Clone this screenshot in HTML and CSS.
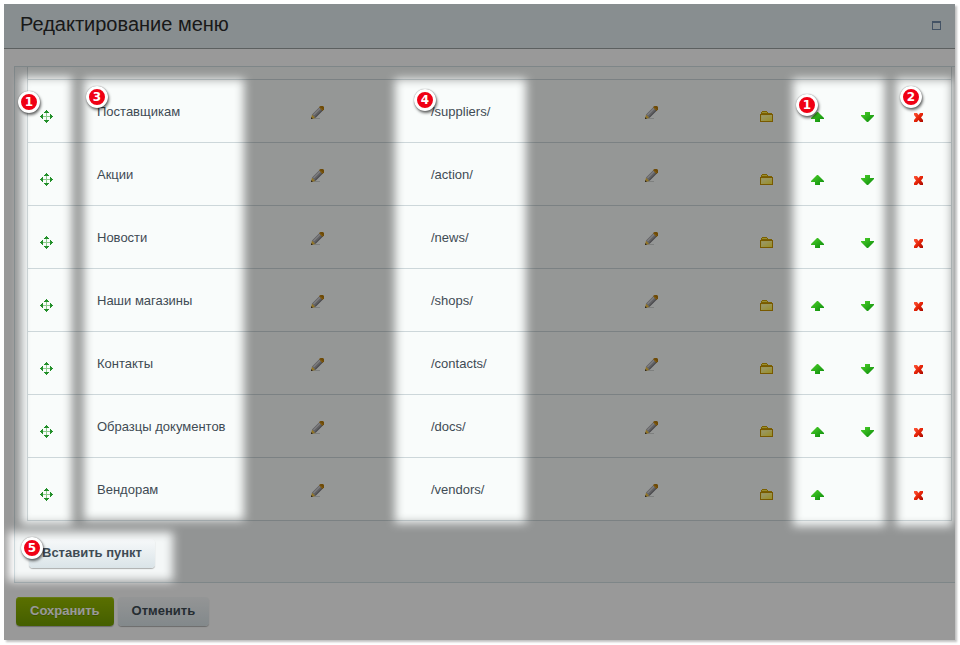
FILE: index.html
```html
<!DOCTYPE html>
<html lang="ru">
<head>
<meta charset="utf-8">
<title>Редактирование меню</title>
<link rel="stylesheet" href="styles.css">
</head>
<body>
<svg class="sprite" aria-hidden="true">
  <defs>
    <linearGradient id="green" x1="0" y1="0" x2="1" y2="1"><stop offset="0" stop-color="#4ed22a"/><stop offset="1" stop-color="#0a8a0a"/></linearGradient>
    <linearGradient id="red" x1="0" y1="0" x2="1" y2="1"><stop offset="0" stop-color="#ff5a3c"/><stop offset=".5" stop-color="#e62408"/><stop offset="1" stop-color="#a80a00"/></linearGradient>
    <linearGradient id="yellow" x1="0" y1="0" x2="1" y2="1"><stop offset="0" stop-color="#fffcb4"/><stop offset="1" stop-color="#ffee3c"/></linearGradient>
  </defs>
  <symbol id="move" viewBox="0 0 13 13">
    <path d="M6 3h1v7H6zM3 6h7v1H3z" fill="#8ccb8c"/>
    <path d="M6 0h1v1h1v1h1v1H4V2h1V1h1zM6 13h1v-1h1v-1h1v-1H4v1h1v1h1zM0 6h1V5h1V4h1v5H2V8H1V7H0zM13 6h-1V5h-1V4h-1v5h1V8h1V7h1z" fill="#23902a"/>
  </symbol>
  <symbol id="pencil" viewBox="0 0 13 13">
    <path d="M2 12.5h7" stroke="#d2d5d4"/>
    <path d="M0 13 1 8.5 4.500 12z" fill="#f0c03c"/>
    <path d="M0 13v-2L2 13z" fill="#504028"/>
    <path d="M1 8.500 8.500 1 12 4.500 4.500 12z" fill="#a0a0a4"/>
    <path d="M2 8.500 9 1.500 10 2.500 3 9.500z" fill="#d0d0d4"/>
    <path d="M4 11.500 11.500 4" stroke="#707074"/>
    <path d="M8 1 9.500 0H12l1 1v2.500L11.500 5z" fill="#b87c0b"/>
    <path d="M9 1.500 11.500 4" stroke="#e8a828"/>
  </symbol>
  <symbol id="folder" viewBox="0 0 13 11">
    <path d="M2 0h5v1h1v1h4v1H1V1h1z" fill="#cda000"/>
    <path d="M2 1h5v1H2z" fill="#ffee50"/>
    <path d="M0 3h13v8H0z" fill="#c89400"/>
    <path d="M1 4h11v6H1z" fill="#fff890"/>
    <path d="M2 5h10v5H2z" fill="url(#yellow)"/>
  </symbol>
  <symbol id="up" viewBox="0 0 13 10"><path d="M6 0h1l2 2 4 4v1H9v3H4V7H0V6l4-4z" fill="url(#green)"/></symbol>
  <symbol id="down" viewBox="0 0 13 10"><path d="M4 0h5v3h4v1L7 10H6L0 4V3h4z" fill="url(#green)"/></symbol>
  <symbol id="cross" viewBox="0 0 9 9"><path d="M0 0h3l1.500 2L6 0h3v2L7 4.500 9 7v2H6L4.500 7 3 9H0V7l2-2.500L0 2z" fill="url(#red)"/></symbol>
</svg>

<form class="dialog">
  <header class="dialog-head">
    <h1>Редактирование меню</h1>
    <button type="button" class="maximize" aria-label="Развернуть"></button>
  </header>
  <main class="pane">
    <table class="menu">
      <colgroup><col class="c-move"><col><col class="c-edit"><col><col class="c-edit-link"><col class="c-folder"><col class="c-up"><col class="c-down"><col class="c-del"></colgroup>
      <thead><tr><td colspan="9"></td></tr></thead>
      <tbody>
        <tr><td class="low move"><button type="button" aria-label="Переместить"><svg width="13" height="13"><use href="#move"/></svg></button></td><td>Поставщикам</td><td><button type="button" aria-label="Изменить название"><svg width="13" height="13"><use href="#pencil"/></svg></button></td><td>/suppliers/</td><td><button type="button" aria-label="Изменить ссылку"><svg width="13" height="13"><use href="#pencil"/></svg></button></td><td class="low"><button type="button" aria-label="Выбрать файл"><svg width="13" height="11"><use href="#folder"/></svg></button></td><td class="low"><button type="button" aria-label="Вверх"><svg width="13" height="10"><use href="#up"/></svg></button></td><td class="low"><button type="button" aria-label="Вниз"><svg width="13" height="10"><use href="#down"/></svg></button></td><td class="low del"><button type="button" aria-label="Удалить"><svg width="9" height="9"><use href="#cross"/></svg></button></td></tr>
        <tr><td class="low move"><button type="button" aria-label="Переместить"><svg width="13" height="13"><use href="#move"/></svg></button></td><td>Акции</td><td><button type="button" aria-label="Изменить название"><svg width="13" height="13"><use href="#pencil"/></svg></button></td><td>/action/</td><td><button type="button" aria-label="Изменить ссылку"><svg width="13" height="13"><use href="#pencil"/></svg></button></td><td class="low"><button type="button" aria-label="Выбрать файл"><svg width="13" height="11"><use href="#folder"/></svg></button></td><td class="low"><button type="button" aria-label="Вверх"><svg width="13" height="10"><use href="#up"/></svg></button></td><td class="low"><button type="button" aria-label="Вниз"><svg width="13" height="10"><use href="#down"/></svg></button></td><td class="low del"><button type="button" aria-label="Удалить"><svg width="9" height="9"><use href="#cross"/></svg></button></td></tr>
        <tr><td class="low move"><button type="button" aria-label="Переместить"><svg width="13" height="13"><use href="#move"/></svg></button></td><td>Новости</td><td><button type="button" aria-label="Изменить название"><svg width="13" height="13"><use href="#pencil"/></svg></button></td><td>/news/</td><td><button type="button" aria-label="Изменить ссылку"><svg width="13" height="13"><use href="#pencil"/></svg></button></td><td class="low"><button type="button" aria-label="Выбрать файл"><svg width="13" height="11"><use href="#folder"/></svg></button></td><td class="low"><button type="button" aria-label="Вверх"><svg width="13" height="10"><use href="#up"/></svg></button></td><td class="low"><button type="button" aria-label="Вниз"><svg width="13" height="10"><use href="#down"/></svg></button></td><td class="low del"><button type="button" aria-label="Удалить"><svg width="9" height="9"><use href="#cross"/></svg></button></td></tr>
        <tr><td class="low move"><button type="button" aria-label="Переместить"><svg width="13" height="13"><use href="#move"/></svg></button></td><td>Наши магазины</td><td><button type="button" aria-label="Изменить название"><svg width="13" height="13"><use href="#pencil"/></svg></button></td><td>/shops/</td><td><button type="button" aria-label="Изменить ссылку"><svg width="13" height="13"><use href="#pencil"/></svg></button></td><td class="low"><button type="button" aria-label="Выбрать файл"><svg width="13" height="11"><use href="#folder"/></svg></button></td><td class="low"><button type="button" aria-label="Вверх"><svg width="13" height="10"><use href="#up"/></svg></button></td><td class="low"><button type="button" aria-label="Вниз"><svg width="13" height="10"><use href="#down"/></svg></button></td><td class="low del"><button type="button" aria-label="Удалить"><svg width="9" height="9"><use href="#cross"/></svg></button></td></tr>
        <tr><td class="low move"><button type="button" aria-label="Переместить"><svg width="13" height="13"><use href="#move"/></svg></button></td><td>Контакты</td><td><button type="button" aria-label="Изменить название"><svg width="13" height="13"><use href="#pencil"/></svg></button></td><td>/contacts/</td><td><button type="button" aria-label="Изменить ссылку"><svg width="13" height="13"><use href="#pencil"/></svg></button></td><td class="low"><button type="button" aria-label="Выбрать файл"><svg width="13" height="11"><use href="#folder"/></svg></button></td><td class="low"><button type="button" aria-label="Вверх"><svg width="13" height="10"><use href="#up"/></svg></button></td><td class="low"><button type="button" aria-label="Вниз"><svg width="13" height="10"><use href="#down"/></svg></button></td><td class="low del"><button type="button" aria-label="Удалить"><svg width="9" height="9"><use href="#cross"/></svg></button></td></tr>
        <tr><td class="low move"><button type="button" aria-label="Переместить"><svg width="13" height="13"><use href="#move"/></svg></button></td><td>Образцы документов</td><td><button type="button" aria-label="Изменить название"><svg width="13" height="13"><use href="#pencil"/></svg></button></td><td>/docs/</td><td><button type="button" aria-label="Изменить ссылку"><svg width="13" height="13"><use href="#pencil"/></svg></button></td><td class="low"><button type="button" aria-label="Выбрать файл"><svg width="13" height="11"><use href="#folder"/></svg></button></td><td class="low"><button type="button" aria-label="Вверх"><svg width="13" height="10"><use href="#up"/></svg></button></td><td class="low"><button type="button" aria-label="Вниз"><svg width="13" height="10"><use href="#down"/></svg></button></td><td class="low del"><button type="button" aria-label="Удалить"><svg width="9" height="9"><use href="#cross"/></svg></button></td></tr>
        <tr><td class="low move"><button type="button" aria-label="Переместить"><svg width="13" height="13"><use href="#move"/></svg></button></td><td>Вендорам</td><td><button type="button" aria-label="Изменить название"><svg width="13" height="13"><use href="#pencil"/></svg></button></td><td>/vendors/</td><td><button type="button" aria-label="Изменить ссылку"><svg width="13" height="13"><use href="#pencil"/></svg></button></td><td class="low"><button type="button" aria-label="Выбрать файл"><svg width="13" height="11"><use href="#folder"/></svg></button></td><td class="low"><button type="button" aria-label="Вверх"><svg width="13" height="10"><use href="#up"/></svg></button></td><td></td><td class="low del"><button type="button" aria-label="Удалить"><svg width="9" height="9"><use href="#cross"/></svg></button></td></tr>
      </tbody>
    </table>
    <button type="button" class="btn insert">Вставить пункт</button>
  </main>
  <footer class="actions">
    <button type="submit" class="btn save">Сохранить</button>
    <button type="button" class="btn">Отменить</button>
  </footer>

  <div class="tour">
    <svg class="shade" width="100%" height="100%" aria-hidden="true">
      <defs>
        <filter id="soft" filterUnits="userSpaceOnUse" x="-2000" y="-100" width="6000" height="1000"><feGaussianBlur stdDeviation="5"/></filter>
        <mask id="spots" maskUnits="userSpaceOnUse" x="0" y="0" width="100%" height="100%">
          <rect width="100%" height="100%" fill="#fff"/>
          <g filter="url(#soft)">
            <rect x="17" y="73" width="51" height="447"/>
            <rect x="80" y="75" width="160" height="441"/>
            <rect x="391" y="75" width="131" height="444"/>
            <rect x="4" y="528" width="165" height="49"/>
            <svg x="100%" overflow="visible">
              <rect x="-162" y="75" width="92" height="447"/>
              <rect x="-59" y="75" width="56" height="447"/>
            </svg>
          </g>
        </mask>
      </defs>
      <rect width="100%" height="100%" fill="#000" fill-opacity=".4" mask="url(#spots)"/>
    </svg>
    <span class="badge b-move">1</span>
    <span class="badge b-name">3</span>
    <span class="badge b-link">4</span>
    <span class="badge b-order">1</span>
    <span class="badge b-del">2</span>
    <span class="badge b-insert">5</span>
  </div>
</form>
</body>
</html>
```
FILE: styles.css
```css
* { box-sizing: border-box; }
body {
  margin: 0;
  padding: 4px 5px 5px 4px;
  background: #fff;
  color: #3f4b54;
  font: 13px/16px "Liberation Sans", Arial, sans-serif;
}
.sprite { position: absolute; width: 0; height: 0; }
button { font: inherit; color: inherit; cursor: pointer; }

.dialog {
  position: relative;
  background: #fff;
  box-shadow: 2px 2px 2px rgba(0, 0, 0, .25);
}
.dialog-head {
  display: flex;
  align-items: center;
  justify-content: space-between;
  height: 45px;
  padding: 0 14px 4px 16px;
  background: #e3edf0;
  border-bottom: 1px solid #9aa0a0;
}
.dialog-head h1 {
  margin: 0;
  font-size: 20px;
  line-height: 24px;
  font-weight: normal;
  color: #2a2a2a;
}
.maximize {
  width: 9px;
  height: 9px;
  margin-top: 3px;
  padding: 0;
  background: none;
  border: 1px solid #728aa8;
  border-top-width: 2px;
}

.pane {
  margin: 17px 0 0 10px;
  padding: 0 3px 14px 12px;
  background: #f4f7f7;
  border: 1px solid #d3dfe3;
  border-right: 0;
}
.menu {
  width: 100%;
  table-layout: fixed;
  border-collapse: separate;
  border-spacing: 0;
  border: 1px solid #d0d8da;
  border-top: 0;
  border-bottom: 0;
  background: #f9fcfb;
}
.c-move { width: 69px; }
.c-edit { width: 120px; }
.c-edit-link { width: 115px; }
.c-folder { width: 51px; }
.c-up { width: 50px; }
.c-down { width: 53px; }
.c-del { width: 37px; }
.menu td {
  height: 63px;
  padding: 2px 0 0;
  border-bottom: 1px solid #cdd7da;
  vertical-align: middle;
}
.menu thead td { height: 13px; }
.menu td.low { padding-top: 11px; }
.menu td.del { padding-top: 13px; }
.menu td.move { padding-left: 12px; }
.menu button { display: block; padding: 0; border: 0; background: none; }
.menu svg { display: block; }

.btn {
  height: 29px;
  padding: 0 13px 2px;
  border: 0;
  border-radius: 4px;
  background: linear-gradient(#f7f9fa, #dae4e8);
  box-shadow: 0 1px 1px rgba(0, 0, 0, .3);
  font-weight: bold;
}
.insert { display: block; margin: 18px 0 0 2px; }
.actions { display: flex; gap: 4px; padding: 14px 12px 14px; }
.actions .btn { padding: 0 14px 2px; }
.btn.save {
  background: linear-gradient(#97ba00, #729e00);
  box-shadow: 0 1px 1px rgba(0, 0, 0, .3), inset 0 1px #a8cc20;
  color: #fff;
  text-shadow: 0 1px rgba(0, 0, 0, .2);
}

.tour { position: absolute; inset: 0; overflow: visible; pointer-events: none; }
.shade { display: block; }
.badge {
  position: absolute;
  width: 22px;
  height: 22px;
  border: 3px solid #fff;
  border-radius: 50%;
  background: #f00014;
  box-shadow: 1px 2px 3px rgba(0, 0, 0, .6), 0 0 1px rgba(0, 0, 0, .5);
  color: #fff;
  font: bold 12px/16px "DejaVu Sans", sans-serif;
  text-align: center;
}
.b-move { left: 14px; top: 87px; }
.b-name { left: 82px; top: 82px; }
.b-link { left: 410px; top: 85px; }
.b-order { right: 137px; top: 90px; }
.b-del { right: 33px; top: 82px; }
.b-insert { left: 17px; top: 533px; }
```
